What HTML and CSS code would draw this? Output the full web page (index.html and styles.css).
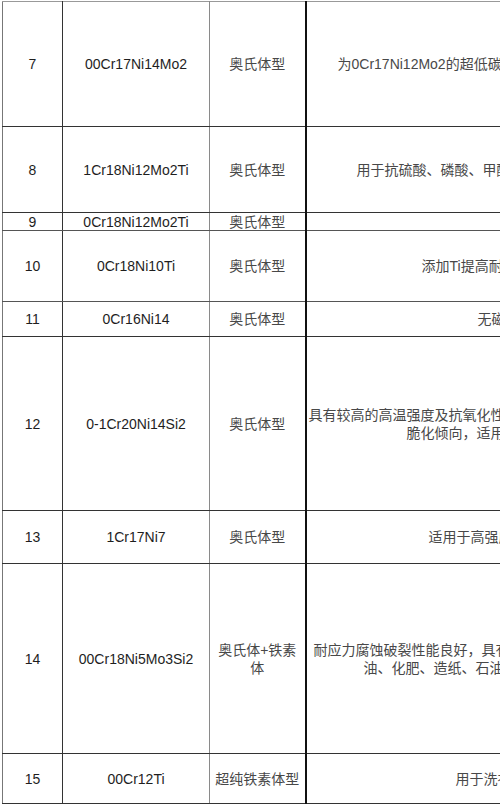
FILE: index.html
```html
<!DOCTYPE html>
<html lang="zh-CN">
<head>
<meta charset="utf-8">
<title>不锈钢牌号</title>
<link rel="stylesheet" href="styles.css">
</head>
<body>
<div class="page">
<table class="steel">
  <colgroup>
    <col class="c-no"><col class="c-grade"><col class="c-type"><col class="c-desc">
  </colgroup>
  <tbody>
    <tr class="r7"><td class="no">7</td><td class="grade">00Cr17Ni14Mo2</td><td class="type">奥氏体型</td><td class="desc"><span class="ln i7">为0Cr17Ni12Mo2的超低碳钢，耐蚀性更好</span></td></tr>
    <tr class="r8"><td class="no">8</td><td class="grade">1Cr18Ni12Mo2Ti</td><td class="type">奥氏体型</td><td class="desc"><span class="ln i8">用于抗硫酸、磷酸、甲酸、乙酸的设备</span></td></tr>
    <tr class="r9"><td class="no">9</td><td class="grade">0Cr18Ni12Mo2Ti</td><td class="type">奥氏体型</td><td class="desc"></td></tr>
    <tr class="r10"><td class="no">10</td><td class="grade">0Cr18Ni10Ti</td><td class="type">奥氏体型</td><td class="desc"><span class="ln i10">添加Ti提高耐晶间腐蚀性</span></td></tr>
    <tr class="r11"><td class="no">11</td><td class="grade">0Cr16Ni14</td><td class="type">奥氏体型</td><td class="desc"><span class="ln i11">无磁不锈钢</span></td></tr>
    <tr class="r12"><td class="no">12</td><td class="grade">0-1Cr20Ni14Si2</td><td class="type">奥氏体型</td><td class="desc"><span class="ln i12a">具有较高的高温强度及抗氧化性，对含硫气氛较敏感</span><span class="ln i12b">脆化倾向，适用于炉用部件</span></td></tr>
    <tr class="r13"><td class="no">13</td><td class="grade">1Cr17Ni7</td><td class="type">奥氏体型</td><td class="desc"><span class="ln i13">适用于高强度结构件</span></td></tr>
    <tr class="r14"><td class="no">14</td><td class="grade">00Cr18Ni5Mo3Si2</td><td class="type">奥氏体+铁素体</td><td class="desc"><span class="ln i14a">耐应力腐蚀破裂性能良好，具有较高强度，适用于炼</span><span class="ln i14b">油、化肥、造纸、石油化工等领域</span></td></tr>
    <tr class="r15"><td class="no">15</td><td class="grade">00Cr12Ti</td><td class="type">超纯铁素体型</td><td class="desc"><span class="ln i15">用于洗衣机内桶等</span></td></tr>
  </tbody>
</table>
</div>
</body>
</html>
```

FILE: styles.css
```css
html, body {
  margin: 0;
  padding: 0;
  background: #ffffff;
}

.page {
  width: 500px;
  height: 806px;
  overflow: hidden;
  padding: 1px 0 0 2px;
  box-sizing: border-box;
}

.steel {
  border-collapse: collapse;
  table-layout: fixed;
  width: 760px;
  font-family: "Liberation Sans", "Noto Sans CJK SC", sans-serif;
  font-size: 14px;
  line-height: 18px;
  color: #1e1e1e;
  border-top: 1px solid #999;
  border-left: 1px solid #777;
}

.c-no { width: 60px; }
.c-grade { width: 147px; }
.c-type { width: 96px; }
.c-desc { width: 457px; }

.steel td {
  padding: 0 3px;
  vertical-align: middle;
  text-align: center;
  border-bottom: 1px solid #333;
  overflow: hidden;
}

.steel td.no { border-right: 1px solid #333; }
.steel td.grade { border-right: 1px solid #8a8a8a; }
.steel td.type {
  border-right: 2px solid #111;
  color: #484848;
}

.steel td.desc {
  text-align: left;
  white-space: nowrap;
  color: #484848;
  padding: 0;
}

.r9 td, .r10 td { border-bottom-color: #555; }

.r7 { height: 125px; }
.r8 { height: 86px; }
.r9 { height: 18px; }
.r10 { height: 71px; }
.r11 { height: 35px; }
.r12 { height: 174px; }
.r13 { height: 53px; }
.r14 { height: 190px; }
.r15 { height: 50px; }

.r9 td { line-height: 16px; }

.ln { display: block; }

.i7 { padding-left: 31px; }
.i8 { padding-left: 50px; }
.i10 { padding-left: 115px; }
.i11 { padding-left: 171px; }
.i12a { padding-left: 2px; }
.i12b { padding-left: 100px; }
.i13 { padding-left: 122px; }
.i14a { padding-left: 7px; }
.i14b { padding-left: 57px; }
.i15 { padding-left: 149px; }
```
